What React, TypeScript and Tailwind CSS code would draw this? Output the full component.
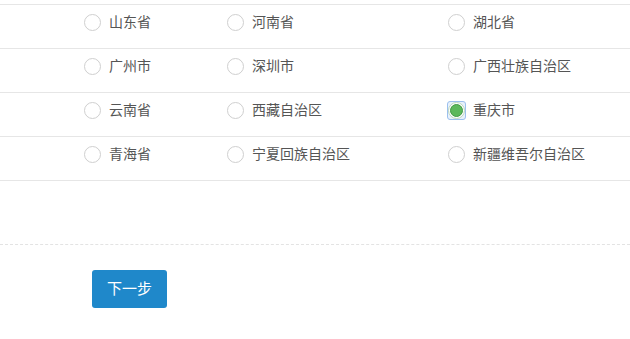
import React from "react";

const rows: string[][] = [
  ["山东省", "河南省", "湖北省"],
  ["广州市", "深圳市", "广西壮族自治区"],
  ["云南省", "西藏自治区", "重庆市"],
  ["青海省", "宁夏回族自治区", "新疆维吾尔自治区"],
];

function Radio({ checked }: { checked: boolean }) {
  if (checked) {
    return (
      <span className="flex h-[19px] w-[19px] items-center justify-center rounded-[3px] border border-[#9cc0ee] bg-[#e8f1fc]">
        <span className="flex h-[17px] w-[17px] items-center justify-center rounded-full border border-[#bcd7bd] bg-white">
          <span className="h-[13px] w-[13px] rounded-full border border-[#3f9a44] bg-[#5cb85c]" />
        </span>
      </span>
    );
  }
  return (
    <span className="flex h-[19px] w-[19px] items-center justify-center">
      <span className="h-[17px] w-[17px] rounded-full border border-[#cfcfcf] bg-white" />
    </span>
  );
}

function Item({ label, checked }: { label: string; checked: boolean }) {
  return (
    <label className="flex items-center gap-[7px]">
      <Radio checked={checked} />
      <span>{label}</span>
    </label>
  );
}

export default function App() {
  return (
    <div
      className="h-[339px] w-[630px] overflow-hidden bg-white text-[14px] text-[#555]"
      style={{ fontFamily: '"Liberation Sans", "Noto Sans CJK SC", sans-serif' }}
    >
      <div className="h-[4px]" />
      <div className="border-b border-[#e6e6e6]">
        {rows.map((r, i) => (
          <div
            key={i}
            className="flex h-[44px] items-center border-t border-[#e6e6e6] pb-[9px] pl-[83px]"
          >
            <div className="w-[143px]">
              <Item label={r[0]} checked={false} />
            </div>
            <div className="w-[221px]">
              <Item label={r[1]} checked={false} />
            </div>
            <div className="flex-1">
              <Item label={r[2]} checked={i === 2} />
            </div>
          </div>
        ))}
      </div>
      <div className="h-[63px]" />
      <div className="border-t border-dashed border-[#e3e3e3]" />
      <div className="pl-[92px] pt-[25px]">
        <button className="flex h-[38px] w-[75px] items-center justify-center rounded-[3px] bg-[#1f88ca] text-[15px] text-white">
          下一步
        </button>
      </div>
    </div>
  );
}
